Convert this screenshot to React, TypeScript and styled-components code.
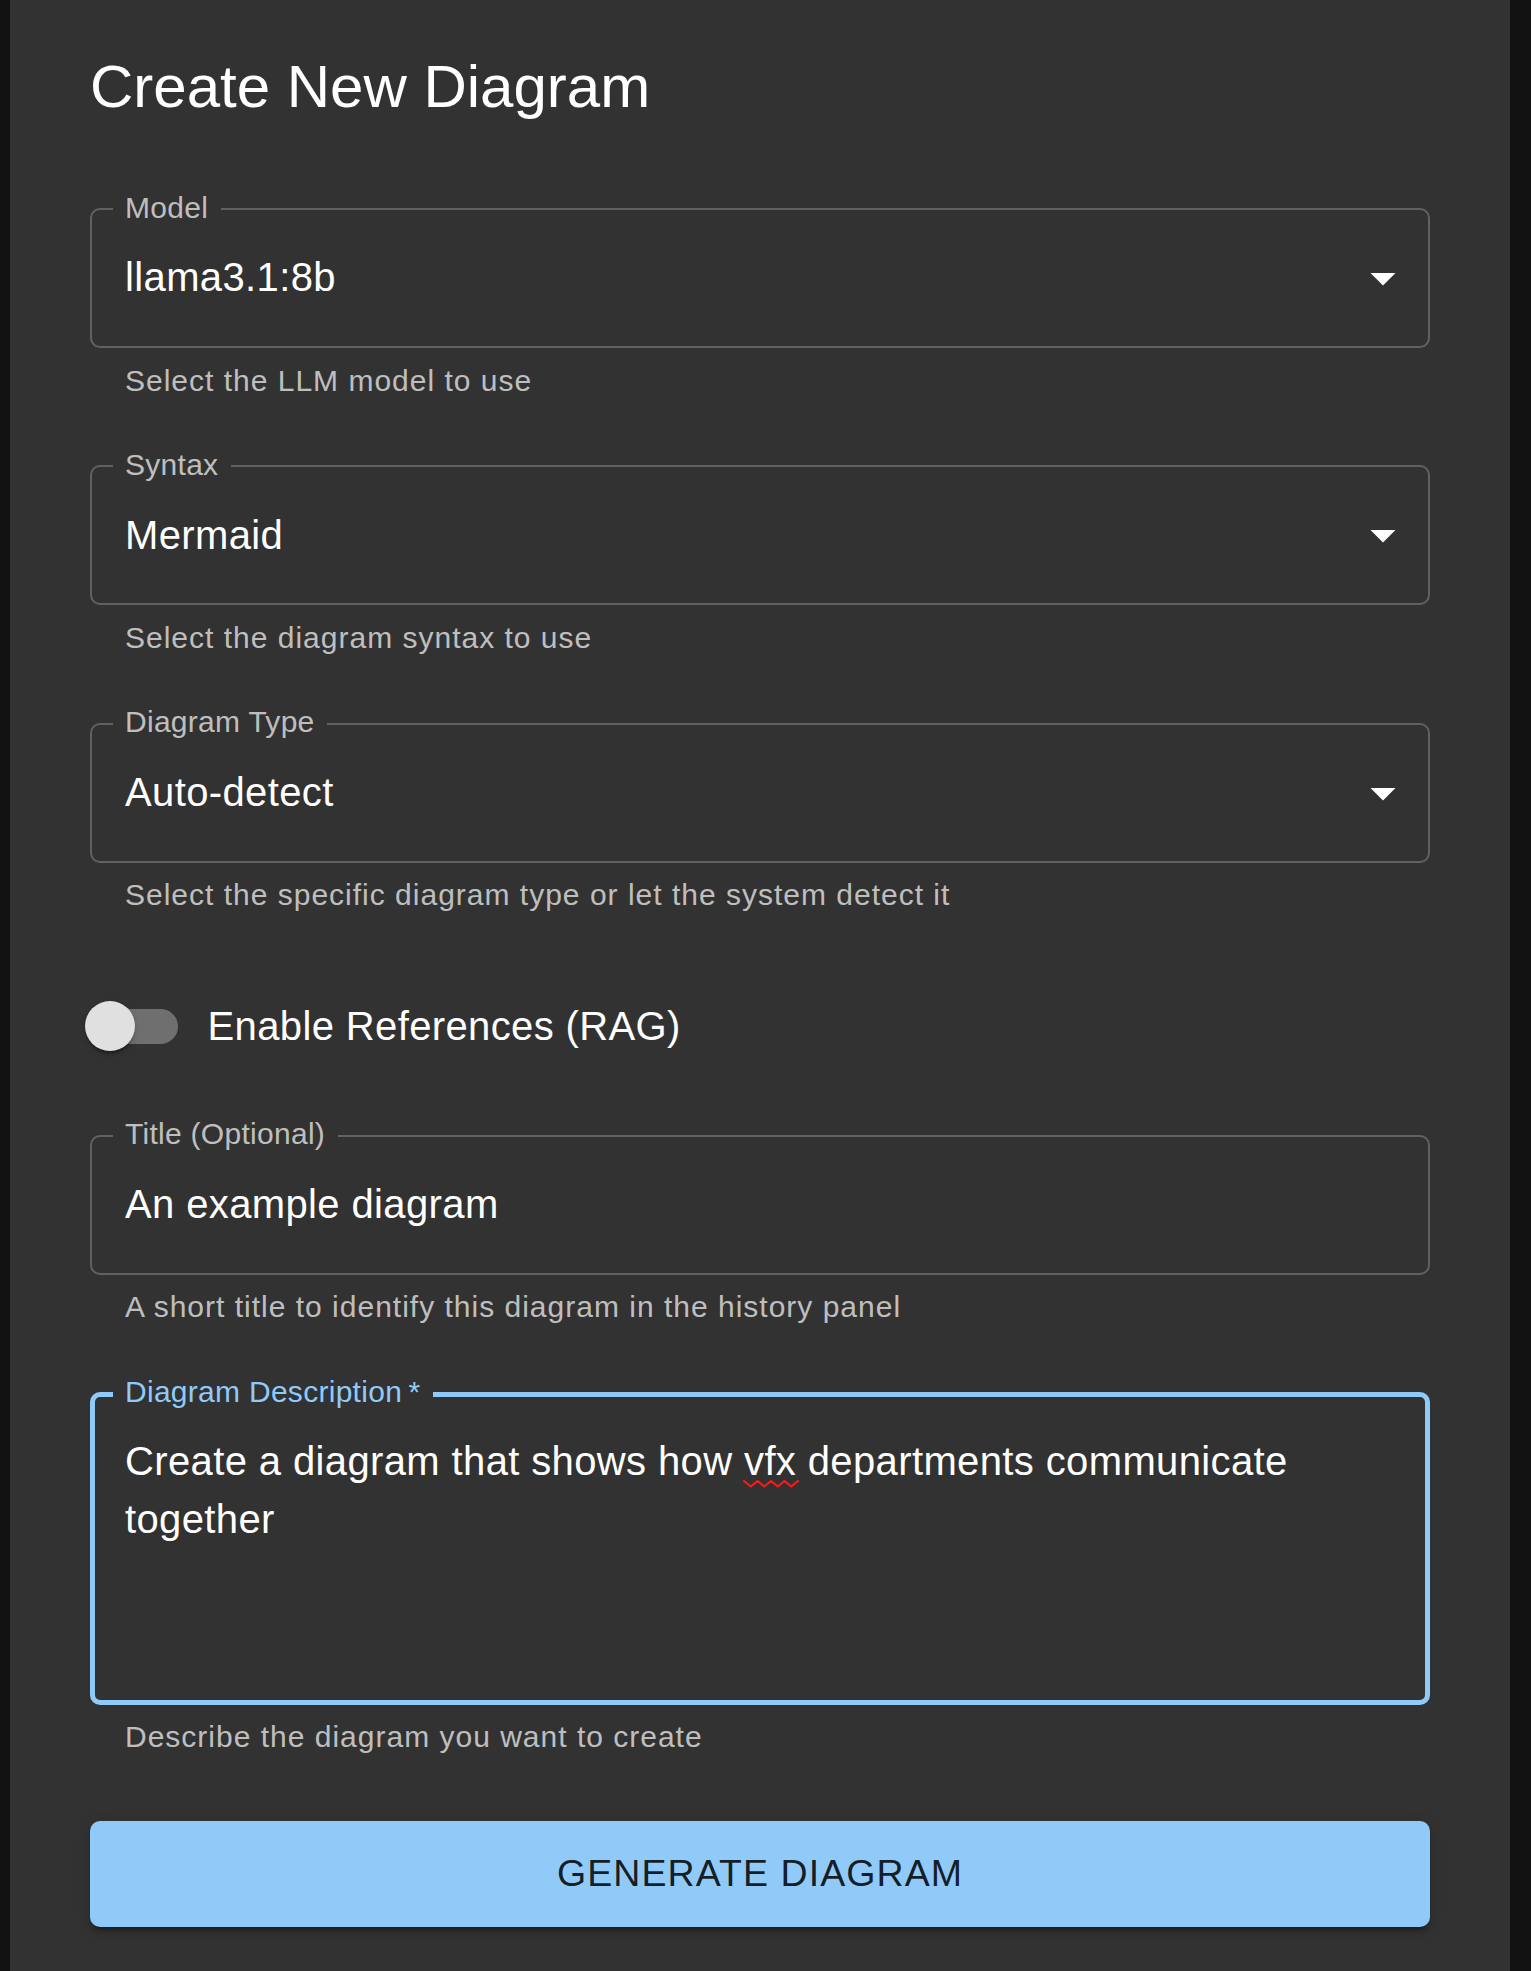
import React from "react";
import styled, { createGlobalStyle } from "styled-components";

const PANEL = "#323232";
const PRIMARY = "#90caf9";

const GlobalStyle = createGlobalStyle`
  html, body {
    margin: 0;
    padding: 0;
    background: #121212;
    overflow: hidden;
  }
  body {
    font-family: "Liberation Sans", Arial, Helvetica, sans-serif;
    -webkit-font-smoothing: antialiased;
  }
  *, *::before, *::after { box-sizing: border-box; }
`;

const Page = styled.div`
  height: 1971px;
  padding: 0 21px 0 10px;
`;

const Panel = styled.main`
  height: 100%;
  background: ${PANEL};
  padding: 47px 80px 0;
  display: flex;
  flex-direction: column;
`;

const Heading = styled.h1`
  margin: 0 0 41px;
  font-size: 60px;
  line-height: 80px;
  font-weight: 400;
  color: #fff;
  letter-spacing: 0;
`;

const Field = styled.div`
  display: flex;
  flex-direction: column;
  margin: 40px 0 20px;
`;

const Outline = styled.div<{ $focused?: boolean }>`
  position: relative;
  border-radius: 10px;
  box-shadow: inset 0 0 0 ${(p) => (p.$focused ? 5 : 2)}px
    ${(p) => (p.$focused ? PRIMARY : "rgba(255, 255, 255, 0.23)")};
`;

const SelectBox = styled(Outline)`
  display: flex;
  align-items: center;
  height: 140px;
  padding: 0 17.5px 0 35px;
`;

const InputBox = styled(Outline)`
  padding: 41.25px 35px;
`;

const FloatLabel = styled.span<{ $focused?: boolean }>`
  position: absolute;
  left: 22.5px;
  top: -22.5px;
  padding: 0 12.5px;
  background: ${PANEL};
  font-size: 30px;
  line-height: 43px;
  letter-spacing: 0.00938em;
  white-space: nowrap;
  color: ${(p) => (p.$focused ? PRIMARY : "rgba(255, 255, 255, 0.7)")};
`;

const Value = styled.div<{ $rows?: number }>`
  flex: 1;
  font-size: 40px;
  line-height: 57.5px;
  letter-spacing: 0.00938em;
  color: #fff;
  min-height: ${(p) => (p.$rows ?? 1) * 57.5}px;
`;

const Misspelled = styled.span`
  position: relative;
`;

const Squiggle = styled.svg`
  position: absolute;
  left: 0;
  top: 40px;
  width: 54px;
  height: 9px;
  overflow: visible;
`;

const Arrow = styled.svg`
  width: 60px;
  height: 60px;
  flex: none;
  fill: #fff;
`;

const Helper = styled.p`
  margin: 7.5px 35px 0;
  font-size: 30px;
  line-height: 49.8px;
  letter-spacing: 1px;
  color: rgba(255, 255, 255, 0.7);
`;

const SwitchRow = styled.label`
  display: flex;
  align-items: center;
  margin: 39px 0 21px -27.5px;
`;

const SwitchRoot = styled.span`
  position: relative;
  display: inline-flex;
  width: 145px;
  height: 95px;
  padding: 30px;
  flex: none;
`;

const Track = styled.span`
  width: 85px;
  height: 35px;
  border-radius: 17.5px;
  background: rgba(255, 255, 255, 0.3);
`;

const Thumb = styled.span`
  position: absolute;
  left: 22.5px;
  top: 22.5px;
  width: 50px;
  height: 50px;
  border-radius: 50%;
  background: #e0e0e0;
  box-shadow: 0 5px 2.5px -2.5px rgba(0, 0, 0, 0.2),
    0 2.5px 2.5px 0 rgba(0, 0, 0, 0.14), 0 2.5px 7.5px 0 rgba(0, 0, 0, 0.12);
`;

const SwitchText = styled.span`
  font-size: 40px;
  line-height: 60px;
  letter-spacing: 0.00938em;
  color: #fff;
`;

const GenerateButton = styled.button`
  margin-top: 39px;
  width: 100%;
  border: 0;
  border-radius: 10px;
  padding: 20px 55px;
  background: ${PRIMARY};
  color: rgba(0, 0, 0, 0.87);
  font-family: inherit;
  font-size: 37.5px;
  font-weight: 500;
  line-height: 1.75;
  letter-spacing: 0.02857em;
  text-transform: uppercase;
  cursor: pointer;
  box-shadow: 0 7.5px 2.5px -5px rgba(0, 0, 0, 0.2),
    0 5px 5px 0 rgba(0, 0, 0, 0.14), 0 2.5px 12.5px 0 rgba(0, 0, 0, 0.12);
`;

const DropIcon = () => (
  <Arrow viewBox="0 0 24 24" aria-hidden="true">
    <path d="M7 10l5 5 5-5z" />
  </Arrow>
);

const SpellWave = () => (
  <Squiggle viewBox="0 0 54 9" aria-hidden="true">
    <path
      d="M0 2 L6.75 7.5 L13.5 2 L20.25 7.5 L27 2 L33.75 7.5 L40.5 2 L47.25 7.5 L54 2"
      fill="none"
      stroke="#ff1a1a"
      strokeWidth="2"
      strokeLinejoin="round"
      strokeLinecap="round"
    />
  </Squiggle>
);

type SelectFieldProps = { label: string; value: string; helper: string };

const SelectField = ({ label, value, helper }: SelectFieldProps) => (
  <Field>
    <SelectBox>
      <FloatLabel>{label}</FloatLabel>
      <Value>{value}</Value>
      <DropIcon />
    </SelectBox>
    <Helper>{helper}</Helper>
  </Field>
);

export default function App() {
  return (
    <>
      <GlobalStyle />
      <Page>
        <Panel>
          <Heading>Create New Diagram</Heading>

          <SelectField label="Model" value="llama3.1:8b" helper="Select the LLM model to use" />
          <SelectField label="Syntax" value="Mermaid" helper="Select the diagram syntax to use" />
          <SelectField
            label="Diagram Type"
            value="Auto-detect"
            helper="Select the specific diagram type or let the system detect it"
          />

          <SwitchRow>
            <SwitchRoot>
              <Track />
              <Thumb />
            </SwitchRoot>
            <SwitchText>Enable References (RAG)</SwitchText>
          </SwitchRow>

          <Field>
            <InputBox>
              <FloatLabel>Title (Optional)</FloatLabel>
              <Value>An example diagram</Value>
            </InputBox>
            <Helper>A short title to identify this diagram in the history panel</Helper>
          </Field>

          <Field>
            <InputBox $focused>
              <FloatLabel $focused>Diagram Description{"\u2009"}*</FloatLabel>
              <Value $rows={4}>
                Create a diagram that shows how{" "}
                <Misspelled>
                  vfx
                  <SpellWave />
                </Misspelled>{" "}
                departments communicate together
              </Value>
            </InputBox>
            <Helper>Describe the diagram you want to create</Helper>
          </Field>

          <GenerateButton type="button">Generate Diagram</GenerateButton>
        </Panel>
      </Page>
    </>
  );
}
